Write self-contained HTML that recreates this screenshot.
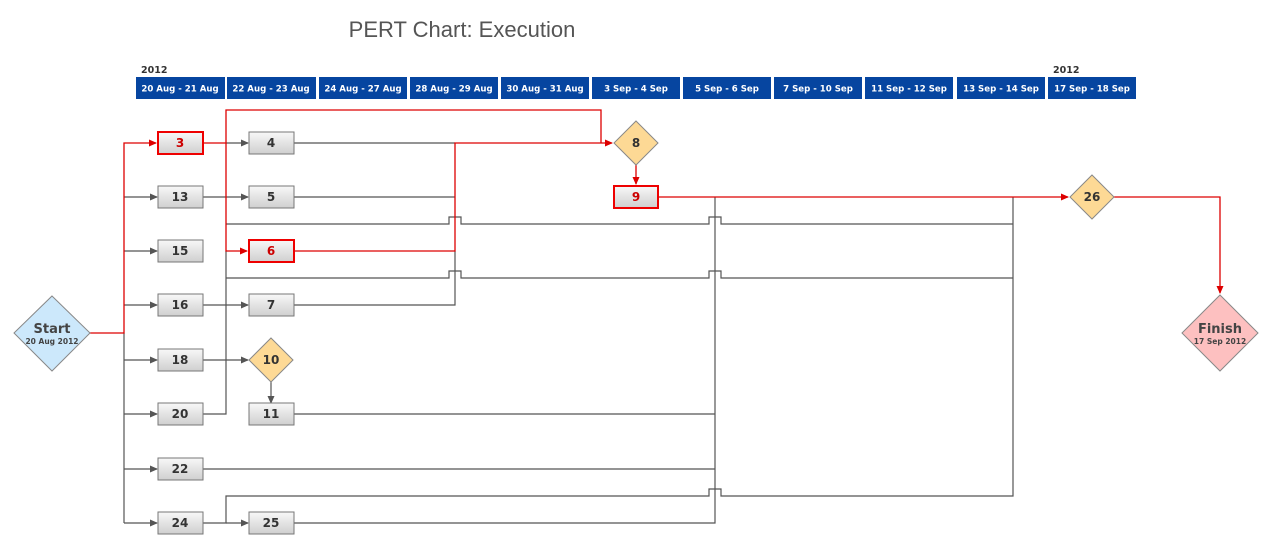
<!DOCTYPE html>
<html><head><meta charset="utf-8"><style>
body{margin:0;background:#fff;width:1272px;height:551px;overflow:hidden}
svg{display:block}
text{font-family:"DejaVu Sans","Liberation Sans",sans-serif}
</style></head><body>
<svg width="1272" height="551" viewBox="0 0 1272 551" xmlns="http://www.w3.org/2000/svg">
<defs>
<linearGradient id="g" x1="0" y1="0" x2="0" y2="1"><stop offset="0" stop-color="#f8f8f8"/><stop offset="1" stop-color="#cfcfcf"/></linearGradient>
<marker id="ag" markerWidth="8" markerHeight="8" refX="7" refY="4" orient="auto" markerUnits="userSpaceOnUse"><path d="M0,0.5 L8,4 L0,7.5z" fill="#555"/></marker>
<marker id="ar" markerWidth="8" markerHeight="8" refX="7" refY="4" orient="auto" markerUnits="userSpaceOnUse"><path d="M0,0.5 L8,4 L0,7.5z" fill="#d00"/></marker>
</defs>
<text x="462" y="37" font-size="22" fill="#555" text-anchor="middle" style="font-family:'Liberation Sans',sans-serif">PERT Chart: Execution</text>
<g font-size="9.5" font-weight="bold" fill="#333"><text x="141" y="73">2012</text><text x="1053" y="73">2012</text></g>
<g fill="#0645a0">
<rect x="136" y="77" width="89" height="22"/><rect x="227" y="77" width="89" height="22"/><rect x="319" y="77" width="88" height="22"/><rect x="410" y="77" width="88" height="22"/><rect x="501" y="77" width="88" height="22"/><rect x="592" y="77" width="88" height="22"/><rect x="683" y="77" width="88" height="22"/><rect x="774" y="77" width="88" height="22"/><rect x="865" y="77" width="88" height="22"/><rect x="957" y="77" width="88" height="22"/><rect x="1048" y="77" width="88" height="22"/>
</g>
<g font-size="8.6" font-weight="bold" fill="#fff" text-anchor="middle">
<text x="180" y="91.5">20 Aug - 21 Aug</text><text x="271" y="91.5">22 Aug - 23 Aug</text><text x="363" y="91.5">24 Aug - 27 Aug</text><text x="454" y="91.5">28 Aug - 29 Aug</text><text x="545" y="91.5">30 Aug - 31 Aug</text><text x="636" y="91.5">3 Sep - 4 Sep</text><text x="727" y="91.5">5 Sep - 6 Sep</text><text x="818" y="91.5">7 Sep - 10 Sep</text><text x="909" y="91.5">11 Sep - 12 Sep</text><text x="1001" y="91.5">13 Sep - 14 Sep</text><text x="1092" y="91.5">17 Sep - 18 Sep</text>
</g>
<g fill="none" stroke="#555" stroke-width="1.2">
<path d="M124 333 V523"/>
<path d="M124 197 H157" marker-end="url(#ag)"/><path d="M124 251 H157" marker-end="url(#ag)"/><path d="M124 305 H157" marker-end="url(#ag)"/><path d="M124 360 H157" marker-end="url(#ag)"/><path d="M124 414 H157" marker-end="url(#ag)"/><path d="M124 469 H157" marker-end="url(#ag)"/><path d="M124 523 H157" marker-end="url(#ag)"/>
<path d="M226 143 H248" marker-end="url(#ag)"/><path d="M203 197 H248" marker-end="url(#ag)"/><path d="M203 305 H248" marker-end="url(#ag)"/><path d="M203 360 H248" marker-end="url(#ag)"/><path d="M226 523 H248" marker-end="url(#ag)"/>
<path d="M271 382 V403" marker-end="url(#ag)"/>
<path d="M203 414 H226 V251"/>
<path d="M294 143 H455"/><path d="M294 197 H455"/><path d="M294 305 H455 V251"/>
<path d="M226 224 H449 V217 H461 V224 H709 V217 H721 V224 H1013"/>
<path d="M226 278 H449 V271 H461 V278 H709 V271 H721 V278 H1013"/>
<path d="M203 523 H226 V496 H709 V489 H721 V496 H1013 V197"/>
<path d="M715 197 V523 H294"/><path d="M294 414 H715"/><path d="M203 469 H715"/>
</g>
<g fill="none" stroke="#d00" stroke-width="1.3">
<path d="M90 333 H124 V143 H156" marker-end="url(#ar)"/>
<path d="M203 143 H226 V110 H601 V143"/>
<path d="M226 143 V251 H247" marker-end="url(#ar)"/>
<path d="M294 251 H455 V143 H612" marker-end="url(#ar)"/>
<path d="M636 165 V184" marker-end="url(#ar)"/>
<path d="M658 197 H1068" marker-end="url(#ar)"/>
<path d="M1114 197 H1220 V293" marker-end="url(#ar)"/>
</g>
<g stroke="#777" stroke-width="1" fill="url(#g)">
<rect x="249" y="132" width="45" height="22"/><rect x="158" y="186" width="45" height="22"/><rect x="249" y="186" width="45" height="22"/><rect x="158" y="240" width="45" height="22"/><rect x="158" y="294" width="45" height="22"/><rect x="249" y="294" width="45" height="22"/><rect x="158" y="349" width="45" height="22"/><rect x="158" y="403" width="45" height="22"/><rect x="249" y="403" width="45" height="22"/><rect x="158" y="458" width="45" height="22"/><rect x="158" y="512" width="45" height="22"/><rect x="249" y="512" width="45" height="22"/>
</g>
<g stroke="#e00" stroke-width="2" fill="url(#g)">
<rect x="158" y="132" width="45" height="22"/><rect x="249" y="240" width="45" height="22"/><rect x="614" y="186" width="44" height="22"/>
</g>
<g stroke="#888" stroke-width="1">
<path d="M636 121 L658 143 L636 165 L614 143z" fill="#fdd995"/>
<path d="M271 338 L293 360 L271 382 L249 360z" fill="#fdd995"/>
<path d="M1092 175 L1114 197 L1092 219 L1070 197z" fill="#fdd995"/>
<path d="M52 296 L90 333 L52 371 L14 333z" fill="#cce8fb"/>
<path d="M1220 295 L1258 333 L1220 371 L1182 333z" fill="#fdc0c0"/>
</g>
<g font-size="12" font-weight="bold" fill="#333" text-anchor="middle">
<text x="180" y="147" fill="#c00">3</text><text x="271" y="147">4</text><text x="180" y="201">13</text><text x="271" y="201">5</text><text x="180" y="255">15</text><text x="271" y="255" fill="#c00">6</text><text x="180" y="309">16</text><text x="271" y="309">7</text><text x="180" y="364">18</text><text x="271" y="364">10</text><text x="180" y="418">20</text><text x="271" y="418">11</text><text x="180" y="473">22</text><text x="180" y="527">24</text><text x="271" y="527">25</text>
<text x="636" y="147">8</text><text x="636" y="201" fill="#c00">9</text><text x="1092" y="201">26</text>
<text x="52" y="333" font-size="13" fill="#444">Start</text><text x="1220" y="333" font-size="13" fill="#444">Finish</text>
<text x="52" y="344" font-size="7.5" fill="#444">20 Aug 2012</text><text x="1220" y="344" font-size="7.5" fill="#444">17 Sep 2012</text>
</g>
</svg>
</body></html>
